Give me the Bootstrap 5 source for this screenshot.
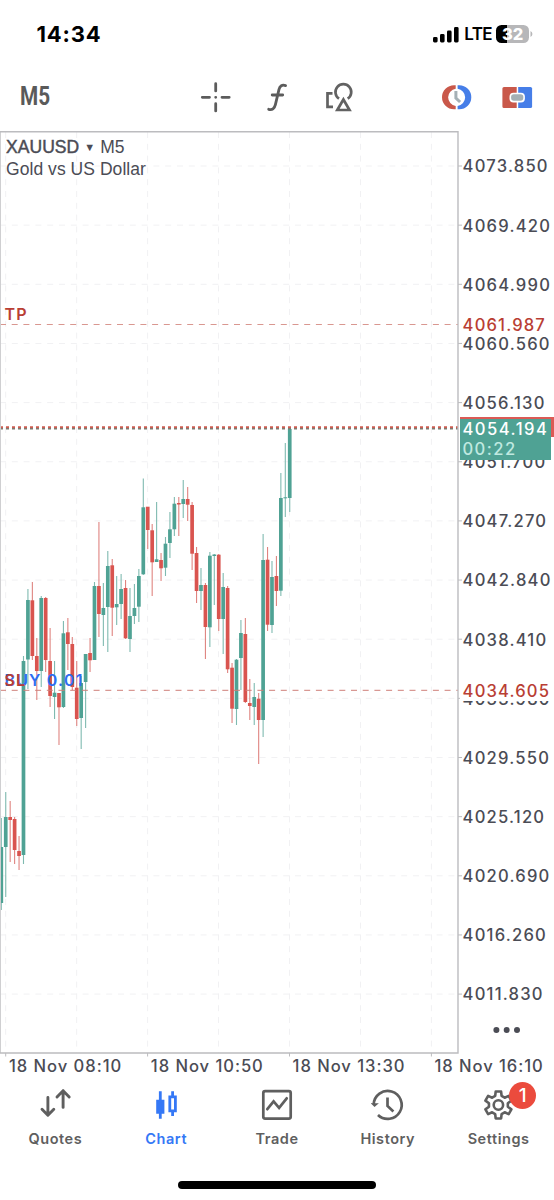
<!DOCTYPE html>
<html lang="en">
<head>
<meta charset="utf-8">
<meta name="viewport" content="width=device-width, initial-scale=1">
<title>XAUUSD M5</title>
<link href="https://cdn.jsdelivr.net/npm/bootstrap@5.3.0/dist/css/bootstrap.min.css" rel="stylesheet">
<style>
  :root { --ink:#4b4c55; --icon:#5f5f5f; --blue:#3578f6; }
  body { width:554px; height:1200px; overflow:hidden; background:#fff; font-family:Inter,"Liberation Sans",sans-serif; color:var(--ink); }
  .status-bar { height:62px; padding:6px 21px 0 36.5px; color:#000; }
  .clock { font-size:22px; font-weight:700; line-height:1; letter-spacing:.85px; }
  .network { font-size:17px; font-weight:600; line-height:1; letter-spacing:-.6px; margin:1px 4px 0 5px; }
  .battery { width:33px; height:18px; border-radius:5.5px; background:linear-gradient(90deg,#000 33%,#b7b7b9 33%); color:#fff; font-size:16.5px; font-weight:800; line-height:18px; letter-spacing:-.1px; }
  .toolbar { height:69px; }
  .frame-name { font-family:Roboto,sans-serif; font-weight:700; font-size:25px; line-height:1; color:#5a5a5a; transform:scaleX(.83); transform-origin:left; margin-left:19.5px; width:142.5px; }
  .plot { width:459px; height:923px; }
  .plot svg { overflow:visible; }
  .chart-row { height:923px; }
  .symbol { left:6px; top:4.5px; font-family:"Liberation Sans",sans-serif; font-size:17.5px; line-height:22px; letter-spacing:.05px; }
  .symbol strong { font-weight:400; -webkit-text-stroke:.45px var(--ink); }
  .caret { font-size:11px; width:21px; }
  .scale { font-size:16.6px; font-weight:500; letter-spacing:1.2px; line-height:20px; white-space:nowrap; }
  .price-axis { width:95px; padding:5.9px 0 0 3.6px; }
  .price-axis > li { height:59.15px; display:flex; align-items:center; }
  .tag { left:1px; padding-left:2.6px; letter-spacing:1.15px; background:#fff; color:#b93e34; height:20px; }
  .tag-ask { left:1px; top:286px; width:94px; height:20px; background:#dc5a55; }
  .tag-bid { left:1px; top:288px; width:91px; height:41px; padding-left:2.4px; background:#4fa294; color:#fff; letter-spacing:1.5px; line-height:20px; }
  .tag-bid small { font-size:inherit; color:#bfe9e0; }
  .time-axis { height:26px; padding-left:9px; }
  .time-axis span { width:141.8px; flex:none; letter-spacing:.95px; line-height:24px; }
  .note { font-size:16px; font-weight:600; letter-spacing:1.15px; line-height:20px; left:4.5px; }
  .more { left:34px; top:893px; }
  .tabs { height:80px; padding-top:8px; }
  .tabs a { flex:1 1 0; color:var(--icon); text-decoration:none; font-size:14.5px; font-weight:600; letter-spacing:.55px; line-height:20px; }
  .tabs a.active { color:var(--blue); }
  .tabs svg { display:block; margin:0 auto 7px; }
  .count { left:66px; top:-6.5px; width:27px; height:27px; border-radius:50%; background:#eb4b3d; color:#fff; font-size:19px; font-weight:500; line-height:27px; letter-spacing:0; }
  .home-bar { width:198px; height:8px; border-radius:4px; background:#000; margin:20.5px 0 0 178px; }
</style>
</head>
<body>
<header>
  <div class="status-bar d-flex align-items-center">
    <div class="clock me-auto">14:34</div>
    <svg width="26" height="17" viewBox="0 0 26 17"><rect x="0" y="11" width="4.6" height="5.5" rx="1.4"/><rect x="7" y="8" width="4.6" height="8.5" rx="1.4"/><rect x="14" y="4.5" width="4.6" height="12" rx="1.4"/><rect x="21" y="1" width="4.6" height="15.5" rx="1.4"/></svg>
    <span class="network">LTE</span>
    <div class="battery text-center">32</div>
    <svg width="4" height="8" viewBox="0 0 4 8"><path d="M1.5 1a3.3 3.3 0 0 1 0 6z" fill="#b7b7b9"/></svg>
  </div>
  <div class="toolbar d-flex align-items-center">
    <div class="frame-name">M5</div>
    <svg class="flex-shrink-0" width="32" height="32" viewBox="0 0 32 32" style="margin-left:38px" stroke="#5c5c5c" stroke-width="2.8" stroke-linecap="round"><path d="M15.7 2.7v7.2M15.7 22.7v7.2M2.3 16.3h7.2M22 16.3h7.2M15.7 16.3h.01"/></svg>
    <svg width="24" height="32" viewBox="0 0 24 32" style="margin-left:34px" fill="none" stroke="#5c5c5c" stroke-width="2.8" stroke-linecap="round"><path d="M19.6 4.6c-3.6-1.2-5.7.3-6.6 3.8L9.4 23.6c-1 4.1-3.2 5.6-6.7 4.7M6.2 14h10.5"/></svg>
    <svg width="32" height="32" viewBox="0 0 32 32" style="margin-left:33.5px" fill="none" stroke="#626262" stroke-width="2.7"><path d="M8.500 12.3H3.500v13.600h5.500M15 17.700a7.900 7.900 0 1 1 8.700 0"/><path d="M19.400 18.500l-6.100 10.500h12.200z"/></svg>
    <svg width="32" height="32" viewBox="0 0 32 32" style="margin-left:85.5px" fill="none"><path d="M14.700 4.300H13A12 12 0 0 0 13 28.300H14.700V24.900A8.900 8.700 0 0 1 14.700 7.700z" fill="#c9584a"/><path d="M16.600 4.300H18.300A12 12 0 0 1 18.300 28.300H16.600V24.900A8.900 8.700 0 0 0 16.600 7.700z" fill="#467ee8"/><path d="M14.900 10v7l4.200 4" stroke="#a5b0b5" stroke-width="3"/></svg>
    <svg width="32" height="32" viewBox="0 0 32 32" style="margin-left:28px" fill="none"><path d="M3 6h12.700v21H3a1.600 1.600 0 0 1-1.600-1.600V7.600A1.600 1.600 0 0 1 3 6z" fill="#c9584a"/><path d="M17.200 6h12.300a1.600 1.600 0 0 1 1.600 1.600v17.800a1.600 1.600 0 0 1-1.600 1.600H17.200z" fill="#467ee8"/><rect x="8.500" y="11.700" width="15.400" height="9.800" rx="4" fill="#fff"/><rect x="10.100" y="13.300" width="12.200" height="6.500" rx="2.800" fill="#a5b0b5"/></svg>
  </div>
</header>
<main>
  <div class="chart-row d-flex">
    <section class="plot position-relative">
      <svg id="plot" class="d-block" width="459" height="923" viewBox="0 131 459 923"></svg>
      <div class="symbol position-absolute"><div class="d-flex"><strong>XAUUSD</strong><span class="caret text-center">▼</span><span>M5</span></div><div>Gold vs US Dollar</div></div>
      <div class="note position-absolute" style="top:173px;color:#b93e34">TP</div>
      <div class="note position-absolute" style="top:539px;color:#2e6df2">BUY 0.01</div>
      <div class="note position-absolute" style="top:539px;color:#b93e34">SL</div>
    </section>
    <aside class="scale position-relative">
      <ul class="price-axis list-unstyled mb-0">
        <li>4073.850</li><li>4069.420</li><li>4064.990</li><li>4060.560</li><li>4056.130</li><li>4051.700</li><li>4047.270</li><li>4042.840</li><li>4038.410</li><li>4033.980</li><li>4029.550</li><li>4025.120</li><li>4020.690</li><li>4016.260</li><li>4011.830</li>
      </ul>
      <div class="tag position-absolute" style="top:184px">4061.987</div>
      <div class="tag position-absolute" style="top:550px">4034.605</div>
      <div class="tag-ask position-absolute"></div>
      <div class="tag-bid position-absolute"><div>4054.194</div><small class="d-block">00:22</small></div>
      <svg class="more position-absolute" width="28" height="12" viewBox="0 0 28 12" fill="#4b4c55"><circle cx="3.4" cy="6" r="3"/><circle cx="13.7" cy="6" r="3"/><circle cx="24" cy="6" r="3"/></svg>
    </aside>
  </div>
  <div class="time-axis scale d-flex"><span>18 Nov 08:10</span><span>18 Nov 10:50</span><span>18 Nov 13:30</span><span>18 Nov 16:10</span></div>
</main>
<nav class="tabs d-flex text-center">
  <a href="#"><svg width="34" height="34" viewBox="0 0 34 34" fill="none" stroke="currentColor" stroke-width="2.9" stroke-linecap="round" stroke-linejoin="round"><path d="M9.9 9.5v17.5M4 21.2l5.9 6 5.9-6M25.100 19.400V2.800M19 9l6.100-6.200L31.200 9"/></svg>Quotes</a>
  <a href="#" class="active"><svg width="34" height="34" viewBox="0 0 34 34" fill="none" stroke="currentColor" stroke-width="2.8"><path d="M11.300 3.200v27.500M23.600 3.200V9M23.600 22.500V28"/><path fill="currentColor" d="M8.600 13.100h5.400v11.200H8.600z"/><path d="M20.800 8.800h5.600v14.100h-5.600z"/></svg>Chart</a>
  <a href="#"><svg width="34" height="34" viewBox="0 0 34 34" fill="none" stroke="currentColor" stroke-width="2.7"><rect x="3.300" y="3.200" width="27.400" height="27.400" rx="1.800"/><path d="M7.300 21.200l6.300-7.800 5.500 6.400 7.600-9.500" stroke-linecap="round"/></svg>Trade</a>
  <a href="#"><svg width="34" height="34" viewBox="1.500 0 34 34" fill="none" stroke="currentColor" stroke-width="2.7"><path d="M4.200 16.400A14 14 0 1 1 8.500 27M18 9.500v8.400l5.900 5.600"/><path d="M.6 15.300h8L4.200 19z" transform="translate(.8)" fill="currentColor" stroke="none"/></svg>History</a>
  <a href="#" class="position-relative"><svg id="gear" width="34" height="34" viewBox="-16.400 -17 34 34" fill="none" stroke="currentColor" stroke-width="2.6" stroke-linejoin="round"><circle r="4.7"/></svg>Settings<span class="count position-absolute">1</span></a>
</nav>
<div class="home-bar"></div>
<script src="https://cdn.jsdelivr.net/npm/bootstrap@5.3.0/dist/js/bootstrap.bundle.min.js"></script>
<script>
  // u = rising, d = falling; then high, low, body top, body bottom
  const candles = `u818,910,847,903 u792,897,817,847 d801,862,817,820 d817,864,819,850 d836,870,851,856 u656,864,661,855
u589,689,600,659.5 d582,660,600.3,656 d638,700,656,671 u596,687,598,671 d597,672,598,660 d628,707,661,696 u661,719,692.7,697
d693,745,693,707.3 u621,708,633.3,707 d618,670,632.3,644 d637,690,644,687 d661,726,687.7,719 u676,749,683,718 u654,728,654,682
d638,672,653,660.3 u582,660,586,660 d522,637,586,614 u583,646,608,615 u551,652,566,607 d559,636,565.3,607.7 u576,625,604,607.3
u574,619,589,604 d580,639,588,638.3 u588,652,616,639 u584,624,608,616 u569,622,576,606.7 u478.5,575,507.3,574.3 d507,549,506.7,530
d524,596,530.3,562.3 u502,562,559.3,562 d553,581,560,568.3 u537,576,543.7,567.7 u512,558,529.3,543 u497,536,503.7,529.3
d497,536,503,504.5 u480,518,499,504 d487,521,499,504.7 d502,570,505,553.7 d547,603,553,591 u568,610,585,591 d583,659,585,627
u552,647,555.7,627.3 u554,605,554.5,556 d554,631,554.7,619 u573,654,587,619 d586,673,588,669.3 d663,723,667.7,708.7
u659,725,659.7,709 u620,690,633,658 d618,703,634,702 d679,720,703,706 u683,725,697,707 d693,764,698.7,720 u534,737,560,720
d547,631,559.7,624.7 u561,633,577,625 d556,606,576,591 u473,596,498,590.7 u443,517,497.3,498.3 u429,512,429,498`.split(/\s+/);
  let s = '';
  const line = (x1, y1, x2, y2, c, extra = '') => { s += `<path d="M${x1} ${y1}L${x2} ${y2}" stroke="${c}" ${extra}/>`; };
  for (let i = 0; i < 15; i++) {
    const y = 166 + i * 59.15;
    line(0, y, 458, y, '#f1f1f3', 'stroke-dasharray="6 5.8"');
    line(458, y, 462, y, '#bcbcbf');
  }
  for (let i = 0; i < 7; i++) {
    const x = 5.7 + i * 70.95;
    line(x, 132, x, 1053, '#f1f1f3', 'stroke-dasharray="6 5.8"');
    // every second gridline carries a time label
    if (i % 2 === 0) line(x, 1053, x, 1056.5, '#bcbcbf');
  }
  candles.forEach((c, i) => {
    const up = c[0] === 'u', [hi, lo, a, b] = c.slice(1).split(',').map(Number), x = 1.3 + i * 4.4375;
    line(x, hi, x, lo, up ? '#7fbab0' : '#df8480', 'stroke-width="1.1"');
    s += `<rect x="${x - 1.85}" y="${a}" width="3.7" height="${b - a}" fill="${up ? '#4fa294' : '#d9544f'}"/>`;
  });
  line(0, 324.5, 458, 324.5, '#d99790', 'stroke-dasharray="6 5.7"');
  line(0, 690.3, 458, 690.3, '#cf7f78', 'stroke-dasharray="6 5.7"');
  line(0, 427.3, 458, 427.3, '#cc5d52', 'stroke-width="2" stroke-dasharray="3 3"');
  line(0, 428.7, 458, 428.7, '#7d7a70', 'stroke-width="1.4" stroke-dasharray="3 3"');
  s += '<path d="M.5 131V1053" stroke="#cfcfd1"/><path d="M0 131.7H458V1053H0" fill="none" stroke="#bcbcbf" stroke-width="1.4"/>';
  document.getElementById('plot').innerHTML = s;

  // six-toothed gear outline
  const n = 6, pts = [];
  for (let k = 0; k < n; k++) {
    const t = k * 2 * Math.PI / n - Math.PI / 2;
    [[-.34, 9.6], [-.2, 13.7], [.2, 13.7], [.34, 9.6]].forEach(([o, r]) => pts.push((Math.cos(t + o) * r).toFixed(2) + ' ' + (Math.sin(t + o) * r).toFixed(2)));
  }
  document.getElementById('gear').insertAdjacentHTML('beforeend', `<path d="M${pts.join('L')}z"/>`);
</script>
</body>
</html>
